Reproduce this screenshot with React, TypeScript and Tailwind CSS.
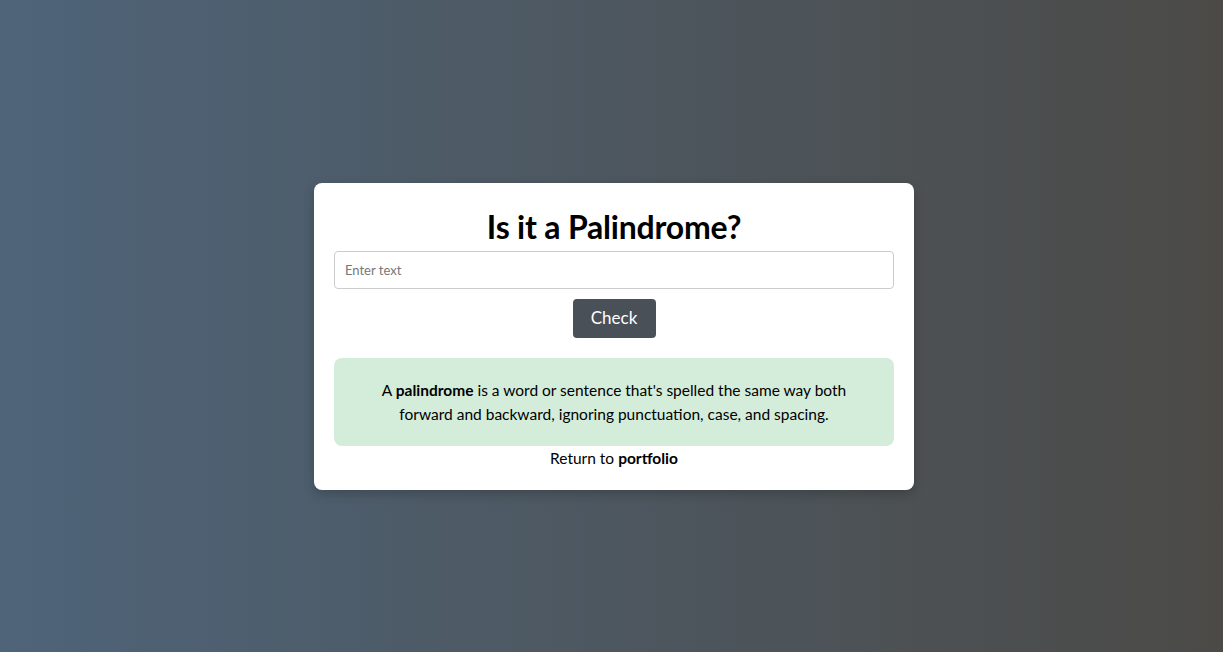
export default function App() {
  return (
    <div
      className="w-full h-[652px] flex items-center justify-center pt-5 pl-[5px] bg-gradient-to-r from-[#4e6479] to-[#4b4a47]"
      style={{ fontFamily: "Lato, 'Noto Sans', sans-serif" }}
    >
      <div className="w-[600px] bg-white rounded-lg shadow-[0_4px_12px_rgba(0,0,0,0.2)] px-5 pt-5 pb-5 flex flex-col items-center">
        <h1 className="mt-1 text-[32px] leading-[40px] font-bold text-black tracking-[-0.2px]">Is it a Palindrome?</h1>
        <input
          className="mt-1 w-full h-[38px] border border-[#cccccc] rounded-[4px] px-[10px] text-[13px] placeholder:text-[#777] outline-none"
          placeholder="Enter text"
        />
        <button className="mt-[10px] w-[83px] h-[39px] bg-[#4a5058] text-white text-[17px] rounded-[4px]">
          Check
        </button>
        <div className="mt-5 w-full h-[88px] bg-[#d4edda] rounded-lg flex items-center justify-center px-[40px]">
          <p className="text-[15.5px] leading-[24px] text-black text-center">
            A <b>palindrome</b> is a word or sentence that's spelled the same way both forward and backward, ignoring punctuation, case, and spacing.
          </p>
        </div>
        <p className="text-[15.5px] leading-[24px] text-black">
          Return to <b>portfolio</b>
        </p>
      </div>
    </div>
  );
}
